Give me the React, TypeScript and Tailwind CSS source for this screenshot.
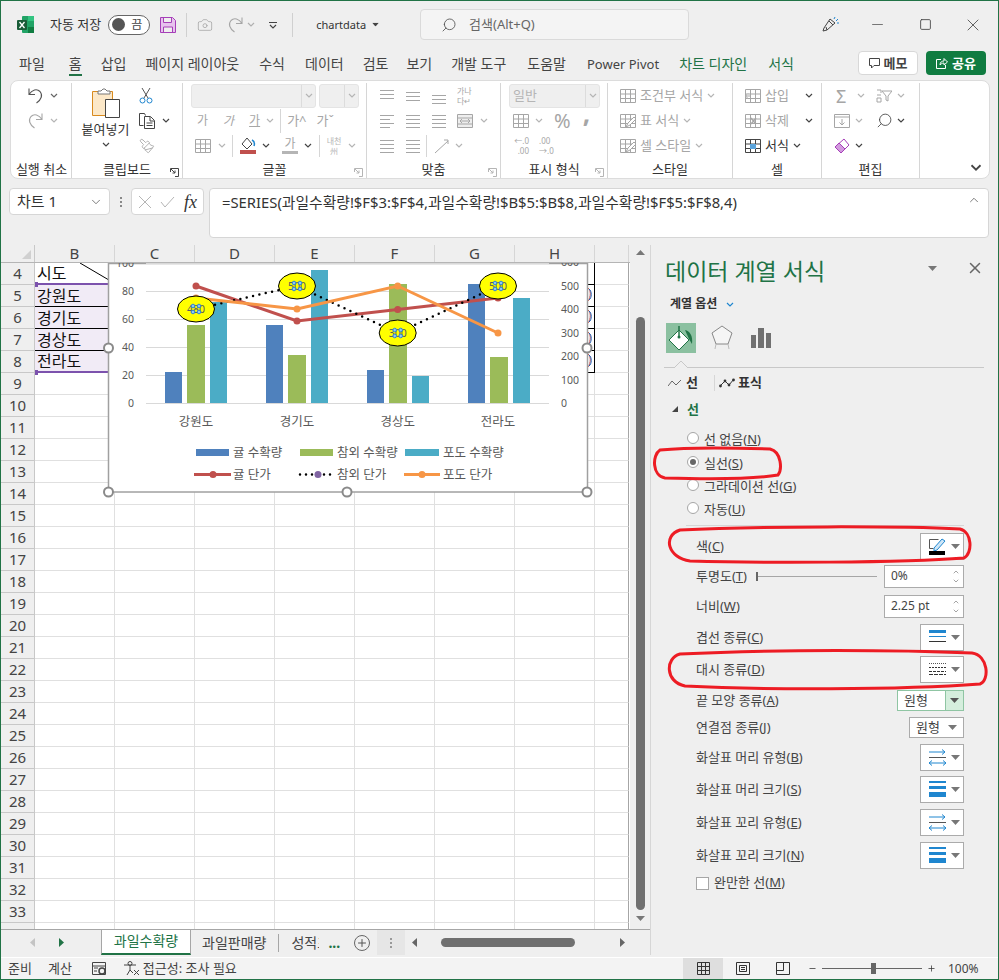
import React, { PropsWithChildren } from "react";
import { Camera, ChevronDown, ChevronUp, Minus, Paintbrush, Plus, Search, Square, X } from "lucide-react";

const cols = ["B", "C", "D", "E", "F", "G", "H", ""];
const rows = Array.from({ length: 31 }, (_, i) => i + 4);
const bCells: Record<number, string> = { 4: "시도", 5: "강원도", 6: "경기도", 7: "경상도", 8: "전라도" };

function Chev({ c = "#666", cls = "" }: { c?: string; cls?: string }) {
  return (
    <svg width="8" height="5" viewBox="0 0 8 5" className={cls}>
      <path d="M1 1l3 3 3-3" fill="none" stroke={c} strokeWidth="1.2" />
    </svg>
  );
}

function Caret({ c = "#666", cls = "" }: { c?: string; cls?: string }) {
  return (
    <svg width="9" height="5" viewBox="0 0 9 5" className={cls}>
      <path d="M0 0h9L4.5 5z" fill={c} />
    </svg>
  );
}

// undo arrow, mirrored for redo
function UndoIcon({ c, flip }: { c: string; flip?: boolean }) {
  return (
    <svg width="17" height="17" viewBox="0 0 17 17" className={flip ? "-scale-x-100" : ""}>
      <path d="M2 1.5v6h6M2 7.5C5 2.5 10 1.5 13 4.5c3 3.5 1.5 8-3.5 11.5" fill="none" stroke={c} strokeWidth="1.1" />
    </svg>
  );
}

function Group({ label, w, launcher, children }: PropsWithChildren<{ label: string; w: string; launcher?: string }>) {
  return (
    <div className={`${w} relative h-full flex flex-col border-r border-[#d6d6d6]`}>
      <div className="h-[75px] flex flex-col">{children}</div>
      <div className="h-[14px] mt-[4px] flex items-center justify-center text-[13px] leading-none text-[#333] whitespace-nowrap">{label}</div>
      {launcher && (
        <svg width="9" height="9" viewBox="0 0 9 9" className="absolute right-[3px] bottom-[1px]">
          <path d="M.5 4V.5h8v8H5M1 1l4 4M5 2.5V5H2.5" fill="none" stroke={launcher} strokeWidth="1" />
        </svg>
      )}
    </div>
  );
}

function Row({ cls = "", children }: PropsWithChildren<{ cls?: string }>) {
  return <div className={`h-[25px] flex items-center ${cls}`}>{children}</div>;
}

function Bars({ ys, x1 = 1, x2 = 15 }: { ys: [number, number][]; x1?: number; x2?: number }) {
  return (
    <svg width="16" height="16" viewBox="0 0 16 16" className="shrink-0">
      {ys.map(([y, w], i) => (
        <path key={i} d={`M${x1} ${y + 0.5}h${w || x2 - x1}`} stroke="#a6a6a6" />
      ))}
    </svg>
  );
}

function GridIcon({ dark = false, mark }: { dark?: boolean; mark?: "pen" | "in" | "del" }) {
  const c = dark ? "#444" : "#a6a6a6";
  return (
    <svg width="16" height="16" viewBox="0 0 16 16" className="shrink-0">
      <path d="M.5 1.5h15v13H.5zM.5 6h15M.5 10.5h15M5.5 1.5v13M10.5 1.5v13" fill="none" stroke={c} />
      {dark && <rect x="5" y="6" width="6" height="5" fill="#5ba4dc" />}
      {mark === "pen" && <path d="M6 14l2-4 6-6 2 2-6 6z" fill="#fff" stroke={c} />}
      {mark === "in" && <path d="M6 8H0M3 5.5L.5 8 3 10.5" fill="#fff" stroke={c} />}
      {mark === "del" && <path d="M6 5l5 6M11 5l-5 6" fill="#fff" stroke={c} strokeWidth="1.4" />}
    </svg>
  );
}

function GrayText({ children }: PropsWithChildren) {
  return <span className="text-[13px] leading-none text-[#a6a6a6] whitespace-nowrap">{children}</span>;
}

function Key({ label, k }: { label: string; k: string }) {
  return (
    <span className="text-[13px] leading-none text-[#444] whitespace-nowrap">
      {label}(<u>{k}</u>)
    </span>
  );
}

function Radio({ label, k, on, cls }: { label: string; k: string; on?: boolean; cls: string }) {
  return (
    <div className={`${cls} flex items-center ml-[36px]`}>
      <span className="w-[12px] h-[12px] rounded-full border border-[#a6a6a6] bg-white flex items-center justify-center">
        {on && <span className="w-[6px] h-[6px] rounded-full bg-[#666]" />}
      </span>
      <span className="ml-[5px]">
        <Key label={label} k={k} />
      </span>
    </div>
  );
}

function Picker({ h = "h-[27px]", children }: PropsWithChildren<{ h?: string }>) {
  return (
    <div className={`${h} w-[44px] border border-[#ababab] bg-white flex items-center pl-[8px] gap-[5px]`}>
      {children}
      <Caret c="#777" />
    </div>
  );
}

function Spinner({ value }: { value: string }) {
  return (
    <div className="w-[80px] h-[23px] border border-[#ababab] bg-white flex items-center justify-between pl-[6px] pr-[3px] text-[12px] text-[#444]">
      <span>{value}</span>
      <span className="flex flex-col gap-[1px]">
        <ChevronUp size={8} color="#777" />
        <ChevronDown size={8} color="#777" />
      </span>
    </div>
  );
}

function ArrowType() {
  return (
    <svg width="17" height="17" viewBox="0 0 17 17">
      <path d="M0 3h16M13 .5L16 3l-3 2.5M0 14h17M3 11.5L0 14l3 2.5M14 11.5l3 2.5-3 2.5" fill="none" stroke="#1f86cf" />
      <path d="M0 8.5h17" stroke="#555" />
    </svg>
  );
}

function ArrowSize() {
  return (
    <svg width="17" height="16" viewBox="0 0 17 16">
      <rect y="0" width="17" height="2" fill="#1f86cf" />
      <rect y="5" width="17" height="3" fill="#1f86cf" />
      <rect y="11" width="17" height="5" fill="#1f86cf" />
    </svg>
  );
}

function Chart() {
  const groups = [
    { x: 196, v: [[165, 371], [187, 324], [210, 301]] },
    { x: 297, v: [[266, 324], [288, 354], [311, 269]] },
    { x: 397.7, v: [[367, 369], [389, 283], [412, 375]] },
    { x: 498, v: [[468, 283], [490, 356], [513, 297]] },
  ];
  const fills = ["#4f81bd", "#9bbb59", "#4bacc6"];
  const widths = [17, 18, 17];
  const bubbles = [
    { x: 196, y: 308, t: "480" },
    { x: 297, y: 285, t: "500" },
    { x: 397.7, y: 332, t: "300" },
    { x: 498, y: 285, t: "500" },
  ];
  const red = [[196, 285], [297, 320], [397.7, 308.5], [498, 297]];
  const orange = [[196, 297], [297, 308], [397.7, 285], [498, 332]];
  const pts = (a: number[][]) => a.map((p) => p.join(",")).join(" ");
  const family = "'Noto Sans','Noto Sans CJK KR',sans-serif";
  const font = { fontFamily: family, fontSize: 12.5, fill: "#595959" };
  const axis = { fontFamily: family, fontSize: 10.5, fill: "#595959" };
  return (
    <svg width="500" height="240" viewBox="98 262 500 240" className="absolute left-[97px] top-[0px]">
      <rect x="108.5" y="262.5" width="479" height="228.5" fill="#fff" stroke="#a0a0a0" strokeWidth="1.5" />
      {[262, 290, 318, 346, 374, 402].map((y) => (
        <path key={y} d={`M146 ${y}.5H549`} stroke="#d9d9d9" />
      ))}
      {["100", "80", "60", "40", "20", "0"].map((t, i) => (
        <text key={t} x="134" y={265.5 + i * 28} textAnchor="end" {...axis}>{t}</text>
      ))}
      {["600", "500", "400", "300", "200", "100", "0"].map((t, i) => (
        <text key={t} x="561" y={265 + i * 23.5} {...axis}>{t}</text>
      ))}
      {groups.map((g) =>
        g.v.map(([x, top], i) => <rect key={x} x={x} y={top} width={widths[i]} height={402 - top} fill={fills[i]} />)
      )}
      {groups.map((g, i) => (
        <text key={i} x={g.x} y="425" textAnchor="middle" {...font}>{["강원도", "경기도", "경상도", "전라도"][i]}</text>
      ))}
      <polyline points={pts(red)} fill="none" stroke="#c0504d" strokeWidth="3" />
      <polyline points={pts(bubbles.map((b) => [b.x, b.y]))} fill="none" stroke="#000" strokeWidth="2.5" strokeLinecap="round" strokeDasharray="0 6.5" />
      <polyline points={pts(orange)} fill="none" stroke="#f79646" strokeWidth="3" />
      {red.map(([x, y]) => <circle key={x} cx={x} cy={y} r="3.5" fill="#c0504d" />)}
      {orange.map(([x, y]) => <circle key={x} cx={x} cy={y} r="3.5" fill="#f79646" />)}
      {bubbles.map((b) => (
        <g key={b.x}>
          <ellipse cx={b.x} cy={b.y} rx="18.5" ry="13" fill="#ffff00" stroke="#000" strokeWidth="1" />
          <text x={b.x} y={b.y + 4} textAnchor="middle" {...axis}>{b.t}</text>
          {[[-3, -3], [3, -3], [-3, 3], [3, 3]].map(([dx, dy]) => (
            <circle key={`${dx}${dy}`} cx={b.x + dx} cy={b.y + dy} r="1.8" fill="#8fc7f2" stroke="#2f86d6" strokeWidth="1" />
          ))}
        </g>
      ))}
      <rect x="196" y="448" width="33" height="7" fill="#4f81bd" />
      <text x="233" y="456" {...font}>귤 수확량</text>
      <rect x="300" y="448" width="33" height="7" fill="#9bbb59" />
      <text x="337" y="456" {...font}>참외 수확량</text>
      <rect x="405" y="448" width="34" height="7" fill="#4bacc6" />
      <text x="443" y="456" {...font}>포도 수확량</text>
      <path d="M194 473.5H231" stroke="#c0504d" strokeWidth="3" />
      <circle cx="213" cy="473.5" r="3.5" fill="#c0504d" />
      <text x="233" y="478" {...font}>귤 단가</text>
      <path d="M300 473.5H334" stroke="#000" strokeWidth="2.5" strokeLinecap="round" strokeDasharray="0 6" />
      <circle cx="318" cy="473.5" r="3.5" fill="#8064a2" />
      <text x="337" y="478" {...font}>참외 단가</text>
      <path d="M404 473.5H440" stroke="#f79646" strokeWidth="3" />
      <circle cx="422" cy="473.5" r="3.5" fill="#f79646" />
      <text x="443" y="478" {...font}>포도 단가</text>
      {[[108.5, 347], [108.5, 491], [347, 491], [587, 491], [587, 347]].map(([x, y]) => (
        <circle key={`${x}${y}`} cx={x} cy={y} r="4.5" fill="#fff" stroke="#8a8a8a" strokeWidth="2" />
      ))}
    </svg>
  );
}

export default function App() {
  return (
    <div className="relative w-[999px] h-[980px] box-border border border-[#217346] bg-[#efefef] overflow-hidden flex flex-col text-[#444] font-['Noto_Sans','Noto_Sans_CJK_KR',sans-serif]">
      {/* title bar */}
      <div className="h-[47px] shrink-0 flex items-center">
        <svg width="17" height="17" viewBox="0 0 17 17" className="ml-[16px]">
          <rect x="5" width="12" height="17" rx="1" fill="#21a366" />
          <rect x="11" width="6" height="5" fill="#33c481" />
          <rect x="11" y="11" width="6" height="6" fill="#107c41" />
          <rect x="0" y="4" width="10" height="10" rx="1" fill="#185c37" />
          <path d="M2.5 6l5 6M7.5 6l-5 6" stroke="#fff" strokeWidth="1.3" />
        </svg>
        <span className="ml-[16px] text-[13px] leading-none text-[#333] whitespace-nowrap">자동 저장</span>
        <div className="ml-[7px] w-[42px] h-[20px] rounded-full border border-[#666] bg-white flex items-center justify-between pl-[3px] pr-[7px]">
          <span className="w-[13px] h-[13px] rounded-full bg-[#555]" />
          <span className="text-[12px] leading-none text-[#444]">끔</span>
        </div>
        <svg width="16" height="16" viewBox="0 0 16 16" className="ml-[10px]">
          <path d="M.5.5h12l3 3v12H.5z" fill="#e7c3ee" stroke="#a63fb8" />
          <path d="M3.5 1v4.5h8V1M3.5 15v-5h9v5" fill="#efefef" stroke="#a63fb8" />
        </svg>
        <span className="ml-[10px] w-px h-[24px] bg-[#d0d0d0]" />
        <Camera size={16} color="#a6a6a6" strokeWidth={1.2} className="ml-[10px]" />
        <span className="ml-[14px]"><UndoIcon c="#a6a6a6" flip /></span>
        <Chev c="#b0b0b0" cls="ml-[3px]" />
        <svg width="8" height="8" viewBox="0 0 8 8" className="ml-[14px]">
          <path d="M0 1.5h8M1 4l3 3 3-3" fill="none" stroke="#444" strokeWidth="1.1" />
        </svg>
        <span className="ml-[15px] w-px h-[24px] bg-[#d0d0d0]" />
        <span className="ml-[23px] text-[11px] leading-none text-[#333]">chartdata</span>
        <Caret c="#444" cls="ml-[5px] scale-75" />
        <div className="ml-[40px] w-[269px] h-[31px] rounded-[4px] border border-[#dadada] bg-[#f4f4f4] flex items-center pl-[20px]">
          <Search size={16} color="#555" strokeWidth={1.3} className="-scale-x-100" />
          <span className="ml-[12px] text-[13px] leading-none text-[#666]">검색(Alt+Q)</span>
        </div>
        <svg width="17" height="17" viewBox="0 0 17 17" className="ml-[133px]">
          <path d="M1 15l1-3 6-9 5 4-8 7zM5 14l-1-3M7 5l4 4" fill="none" stroke="#444" />
          <path d="M12 3l1-2M14 5l2-2M15 7h2" stroke="#1f86cf" />
        </svg>
        <Minus size={17} color="#444" strokeWidth={1} className="ml-[30px]" />
        <Square size={13} color="#444" strokeWidth={1.6} className="ml-[33px]" />
        <X size={20} color="#444" strokeWidth={1} className="ml-[31px]" />
      </div>

      {/* menu tabs */}
      <div className="h-[32px] shrink-0 flex items-center pl-[18px] text-[14px] leading-none text-[#444] whitespace-nowrap relative">
        <span>파일</span>
        <span className="ml-[24px] relative">
          홈<span className="absolute left-0 right-0 top-[17px] h-[2px] bg-[#217346]" />
        </span>
        <span className="ml-[19px]">삽입</span>
        <span className="ml-[19px]">페이지 레이아웃</span>
        <span className="ml-[20px]">수식</span>
        <span className="ml-[20px]">데이터</span>
        <span className="ml-[19px]">검토</span>
        <span className="ml-[18px]">보기</span>
        <span className="ml-[19px]">개발 도구</span>
        <span className="ml-[21px]">도움말</span>
        <span className="ml-[21px] text-[13px]">Power Pivot</span>
        <span className="ml-[20px] text-[#217346]">차트 디자인</span>
        <span className="ml-[21px] text-[#217346]">서식</span>
        <div className="absolute left-[857px] top-[3px] w-[60px] h-[24px] rounded-[4px] border border-[#d8d8d8] bg-white flex items-center justify-center gap-[4px] text-[13px] font-bold">
          <svg width="11" height="11" viewBox="0 0 11 11">
            <path d="M.5.5h10v7H5L2.5 10V7.5h-2z" fill="none" stroke="#444" />
          </svg>
          메모
        </div>
        <div className="absolute left-[925px] top-[3px] w-[60px] h-[24px] rounded-[4px] bg-[#107c41] flex items-center justify-center gap-[4px] text-[13px] font-bold text-white">
          <svg width="12" height="12" viewBox="0 0 12 12">
            <path d="M5 2.5H.5v9h9V8M4 8c0-3 2-4 4-4V1.5l3.5 3.5L8 8V6C6 6 5 7 4 8z" fill="none" stroke="#fff" />
          </svg>
          공유
        </div>
      </div>

      {/* ribbon */}
      <div className="ml-[9px] w-[980px] h-[99px] shrink-0 rounded-[8px] border border-[#dcdcdc] bg-white flex pt-[2px] pl-[1px] relative">
        <Group label="실행 취소" w="w-[60px]">
          <Row cls="pl-[15px] gap-[6px]">
            <UndoIcon c="#555" />
            <Chev />
          </Row>
          <Row cls="pl-[15px] gap-[6px]">
            <UndoIcon c="#a6a6a6" flip />
            <Chev c="#b5b5b5" />
          </Row>
        </Group>
        <Group label="클립보드" w="w-[111px]" launcher="#444">
          <div className="flex h-full">
            <div className="w-[67px] flex flex-col items-center pt-[5px]">
              <svg width="28" height="30" viewBox="0 0 28 30">
                <path d="M.5 3.5h20v24H.5z" fill="#fce8c8" stroke="#d88a1e" strokeWidth="1" />
                <path d="M6 6V3h3l2-2h2l2 2h3v3z" fill="#fff" stroke="#777" />
                <path d="M13.5 11.5h14v18h-14z" fill="#fff" stroke="#444" />
              </svg>
              <span className="mt-[5px] text-[13px] leading-none text-[#333] whitespace-nowrap">붙여넣기</span>
              <Chev c="#444" cls="mt-[6px]" />
            </div>
            <div className="flex flex-col">
              <Row>
                <svg width="14" height="17" viewBox="0 0 14 17">
                  <path d="M3 1l6 10M11 1L5 11" stroke="#555" fill="none" />
                  <circle cx="3.5" cy="13.5" r="2.5" fill="none" stroke="#1f86cf" />
                  <circle cx="10.5" cy="13.5" r="2.5" fill="none" stroke="#1f86cf" />
                </svg>
              </Row>
              <Row cls="gap-[7px]">
                <svg width="16" height="16" viewBox="0 0 16 16">
                  <path d="M4.5 12.5h-4V.5h5l1 2" fill="none" stroke="#444" />
                  <path d="M5.5 3.5h6l4 4v8h-10zM11 4v4h4M7.5 10h6M7.5 12.5h6" fill="#fff" stroke="#444" />
                </svg>
                <Chev c="#444" />
              </Row>
              <Row>
                <Paintbrush size={16} color="#a6a6a6" strokeWidth={1.3} className="-scale-x-100" />
              </Row>
            </div>
          </div>
        </Group>
        <Group label="글꼴" w="w-[184px]" launcher="#b5b5b5">
          <Row cls="pl-[8px] gap-[3px]">
            <div className="w-[125px] h-[24px] rounded-[3px] border border-[#e4e4e4] bg-[#efefef] flex justify-end">
              <span className="w-[14px] border-l border-[#dcdcdc] flex items-center justify-center"><Chev c="#b5b5b5" /></span>
            </div>
            <div className="w-[40px] h-[24px] rounded-[3px] border border-[#e4e4e4] bg-[#efefef] flex justify-end">
              <span className="w-[14px] border-l border-[#dcdcdc] flex items-center justify-center"><Chev c="#b5b5b5" /></span>
            </div>
          </Row>
          <Row cls="pl-[14px] text-[12px] text-[#a6a6a6] leading-none">
            <span>가</span>
            <span className="ml-[15px] italic">가</span>
            <span className="ml-[15px] underline">가</span>
            <Chev c="#b5b5b5" cls="ml-[6px]" />
            <span className="ml-[6px] w-px h-[24px] bg-[#d6d6d6]" />
            <span className="ml-[6px] text-[13px]">가^</span>
            <span className="ml-[10px] text-[13px]">가ˇ</span>
          </Row>
          <Row cls="pl-[12px]">
            <GridIcon />
            <Chev c="#b5b5b5" cls="ml-[7px]" />
            <span className="ml-[6px] w-px h-[22px] bg-[#d6d6d6]" />
            <svg width="16" height="17" viewBox="0 0 16 17" className="ml-[7px]">
              <path d="M7 1l-5 6 5 5 5-5z" fill="none" stroke="#444" />
              <path d="M12 3c2 1 3 3 2 6" fill="none" stroke="#1f86cf" strokeWidth="1.5" />
              <rect y="13" width="16" height="4" fill="#c0504d" />
            </svg>
            <Chev c="#444" cls="ml-[6px]" />
            <span className="ml-[12px] w-[16px] flex flex-col items-center text-[12px] leading-none text-[#a6a6a6]">
              가<span className="w-[16px] h-[3px] mt-[1px] bg-[#b5b5b5]" />
            </span>
            <Chev c="#444" cls="ml-[6px]" />
            <span className="ml-[7px] w-px h-[22px] bg-[#d6d6d6]" />
            <span className="ml-[5px] w-[18px] text-[8px] leading-[10px] text-center text-[#b5b5b5]">내천<br />州</span>
            <Chev c="#b5b5b5" cls="ml-[5px]" />
          </Row>
        </Group>
        <Group label="맞춤" w="w-[134px]" launcher="#b5b5b5">
          <Row cls="pl-[12px] gap-[10px]">
            <Bars ys={[[2, 0], [6, 0], [10, 0]]} />
            <Bars ys={[[4, 0], [8, 0], [12, 0]]} />
            <Bars ys={[[7, 0], [11, 0], [15, 0]]} />
            <span className="text-[8px] leading-[10px] text-[#a6a6a6] w-[18px]">가나<br />다↵</span>
          </Row>
          <Row cls="pl-[12px] gap-[10px]">
            <Bars ys={[[2, 0], [6, 10], [10, 0], [14, 10]]} />
            <Bars ys={[[2, 0], [6, 0], [10, 0], [14, 0]]} />
            <Bars ys={[[2, 0], [6, 0], [10, 0], [14, 0]]} />
            <svg width="16" height="16" viewBox="0 0 16 16">
              <path d="M.5 1.5h15v13H.5zM.5 5h15M.5 11h15M3 8h10M5 6l-2 2 2 2M11 6l2 2-2 2" fill="#eee" stroke="#a6a6a6" />
            </svg>
            <Chev c="#b5b5b5" cls="-ml-[3px]" />
          </Row>
          <Row cls="pl-[12px]">
            <Bars ys={[[2, 0], [6, 0], [10, 0], [14, 0]]} />
            <span className="ml-[10px]"><Bars ys={[[2, 0], [6, 0], [10, 0], [14, 0]]} /></span>
            <span className="ml-[5px] w-px h-[22px] bg-[#d6d6d6]" />
            <svg width="17" height="16" viewBox="0 0 17 16" className="ml-[6px]">
              <path d="M2 15L15 3M11 2h4v4" fill="none" stroke="#a6a6a6" />
            </svg>
            <Chev c="#b5b5b5" cls="ml-[5px]" />
          </Row>
        </Group>
        <Group label="표시 형식" w="w-[107px]" launcher="#b5b5b5">
          <Row cls="pl-[8px]">
            <div className="w-[91px] h-[24px] rounded-[3px] border border-[#e4e4e4] bg-[#efefef] flex items-center justify-between pl-[3px] text-[13px] leading-none text-[#b5b5b5]">
              일반
              <span className="w-[14px] h-full border-l border-[#dcdcdc] flex items-center justify-center"><Chev c="#b5b5b5" /></span>
            </div>
          </Row>
          <Row cls="pl-[12px]">
            <GridIcon />
            <Chev c="#b5b5b5" cls="ml-[6px]" />
            <span className="ml-[11px] text-[20px] leading-none text-[#a6a6a6]">%</span>
            <span className="ml-[12px] h-[25px] text-[26px] leading-none font-bold text-[#a6a6a6] -mt-[16px]">,</span>
          </Row>
          <Row cls="pl-[12px] gap-[10px] text-[8px] leading-[10px] text-[#a6a6a6]">
            <span className="w-[16px] text-right">←.0<br />.00</span>
            <span className="w-[16px]">.00<br />→.0</span>
          </Row>
        </Group>
        <Group label="스타일" w="w-[125px]">
          <Row cls="pl-[12px] gap-[4px]"><GridIcon /><GrayText>조건부 서식</GrayText><Chev c="#b5b5b5" /></Row>
          <Row cls="pl-[12px] gap-[4px]"><GridIcon mark="pen" /><GrayText>표 서식</GrayText><Chev c="#b5b5b5" /></Row>
          <Row cls="pl-[12px] gap-[4px]"><GridIcon mark="pen" /><GrayText>셀 스타일</GrayText><Chev c="#b5b5b5" /></Row>
        </Group>
        <Group label="셀" w="w-[89px]">
          <Row cls="pl-[12px] gap-[4px]"><GridIcon mark="in" /><GrayText>삽입</GrayText><Chev c="#444" cls="ml-[12px]" /></Row>
          <Row cls="pl-[12px] gap-[4px]"><GridIcon mark="del" /><GrayText>삭제</GrayText><Chev c="#444" cls="ml-[12px]" /></Row>
          <Row cls="pl-[12px] gap-[4px]">
            <GridIcon dark />
            <span className="text-[13px] leading-none text-[#333]">서식</span>
            <Chev c="#444" />
          </Row>
        </Group>
        <Group label="편집" w="w-[98px]">
          <Row cls="pl-[14px]">
            <span className="w-[16px] text-[18px] leading-none text-[#a6a6a6]">Σ</span>
            <Chev c="#b5b5b5" cls="ml-[5px]" />
            <svg width="16" height="14" viewBox="0 0 16 14" className="ml-[11px]">
              <path d="M1 1h4v3M1 6h4M1 9h4v4H1zM6 2h10l-4 5v5l-2-1V7z" fill="none" stroke="#a6a6a6" />
            </svg>
            <Chev c="#b5b5b5" cls="ml-[5px]" />
          </Row>
          <Row cls="pl-[12px]">
            <svg width="16" height="14" viewBox="0 0 16 14">
              <path d="M.5.5h15v13H.5zM.5 3h15M8 5v6M5.5 8.5L8 11l2.5-2.5" fill="none" stroke="#a6a6a6" />
            </svg>
            <Chev c="#b5b5b5" cls="ml-[5px]" />
            <Search size={17} color="#444" strokeWidth={1.2} className="ml-[13px] -scale-x-100" />
            <Chev c="#444" cls="ml-[4px]" />
          </Row>
          <Row cls="pl-[12px]">
            <svg width="16" height="16" viewBox="0 0 16 16">
              <path d="M10 1l5 6-8 8-6-6z" fill="#fff" stroke="#a63fb8" />
              <path d="M5 5l6 6-4 4-6-6z" fill="#d29ade" stroke="#a63fb8" />
            </svg>
            <Chev c="#444" cls="ml-[5px]" />
          </Row>
        </Group>
        <Chev c="#444" cls="absolute right-[9px] top-[84px] scale-150" />
      </div>

      {/* formula bar */}
      <div className="h-[50px] mt-[9px] shrink-0 flex items-start pl-[8px]">
        <div className="w-[101px] h-[27px] rounded-[4px] border border-[#d6d6d6] bg-white flex items-center justify-between pl-[7px] pr-[6px] text-[15px] leading-none text-[#333]">
          차트 1
          <ChevronDown size={14} color="#555" strokeWidth={1.3} />
        </div>
        <div className="w-[21px] h-[27px] flex flex-col items-center justify-center gap-[2px]">
          <span className="w-[2px] h-[2px] bg-[#888]" />
          <span className="w-[2px] h-[2px] bg-[#888]" />
          <span className="w-[2px] h-[2px] bg-[#888]" />
        </div>
        <div className="w-[73px] h-[27px] rounded-[4px] border border-[#d6d6d6] bg-white flex items-center pl-[7px] gap-[9px]">
          <svg width="12" height="12" viewBox="0 0 12 12">
            <path d="M0 0l12 12M12 0L0 12" stroke="#b5b5b5" />
          </svg>
          <svg width="15" height="12" viewBox="0 0 15 12">
            <path d="M1 6l4 5 9-10" fill="none" stroke="#b5b5b5" />
          </svg>
          <span className="text-[18px] leading-none italic text-[#333] font-['Liberation_Serif',serif]">fx</span>
        </div>
        <div className="ml-[5px] w-[780px] h-[50px] rounded-[4px] border border-[#d6d6d6] bg-white pl-[12px] pt-[4px] flex justify-between pr-[7px]">
          <span className="text-[14.8px] leading-[18px] text-[#333] whitespace-nowrap">=SERIES(과일수확량!$F$3:$F$4,과일수확량!$B$5:$B$8,과일수확량!$F$5:$F$8,4)</span>
          <ChevronUp size={14} color="#555" strokeWidth={1.3} />
        </div>
      </div>

      {/* workspace */}
      <div className="mt-[7px] h-[710px] shrink-0 flex">
        <div className="w-[649px] flex flex-col shrink-0">
          <div className="flex-1 flex min-h-0">
            <div className="w-[629px] shrink-0 flex flex-col">
              <div className="h-[18px] shrink-0 flex bg-[#efefef] border-b border-[#b5b5b5] text-[15px] leading-none text-[#444]">
                <div className="w-[34px] border-r border-[#c8c8c8] flex justify-end items-end pr-[3px] pb-[3px]">
                  <svg width="9" height="9" viewBox="0 0 9 9"><path d="M9 0v9H0z" fill="#d0d0d0" /></svg>
                </div>
                {cols.map((c) => (
                  <div key={c} className={`${c ? "w-[80px]" : "w-[34px]"} border-r border-[#d6d6d6] flex items-center justify-center`}>{c}</div>
                ))}
              </div>
              <div className="relative flex-1 overflow-hidden bg-white">
                {rows.map((r) => (
                  <div key={r} className="h-[22px] flex">
                    <div className="w-[34px] shrink-0 bg-[#efefef] border-r border-b border-[#c8c8c8] flex items-center justify-center text-[15px] leading-none text-[#444]">{r}</div>
                    {cols.map((c) => {
                      const isB = c === "B" && r >= 5 && r <= 8;
                      const isH = c === "H" && r >= 4 && r <= 8;
                      const purple = c === "B" && (r === 4 || r === 8);
                      let tone = "border-[#e0e0e0]";
                      if (purple) tone = "border-r-[#d9d9d9] border-b-[#7c52ad]";
                      else if (isB) tone = "border-r-[#d9d9d9] border-b-black";
                      else if (isH) tone = "border-r-black border-b-black";
                      else if (c === "") tone = "border-b-[#e0e0e0] border-r-[#a6a6a6]";
                      return (
                        <div
                          key={c}
                          className={`${c ? "w-[80px]" : "w-[34px]"} relative shrink-0 border-r ${purple ? "border-b-2" : "border-b"} ${tone} ${
                            isB ? "bg-[#f1ebf6]" : ""
                          } flex items-center pl-[2px] text-[16px] leading-none text-[#111]`}
                        >
                          {c === "B" && bCells[r]}
                          {c === "B" && r === 4 && (
                            <svg width="34" height="22" viewBox="0 0 34 22" className="absolute right-[0px] top-[0px]">
                              <path d="M0 0l34 20" stroke="#000" />
                            </svg>
                          )}
                          {isH && r > 4 && (
                            <svg width="4" height="14" viewBox="0 0 4 14" className="absolute right-[2px] top-[3px]">
                              <path d="M0 0c3 2 3 9 0 13" fill="none" stroke="#c0504d" strokeWidth="1" />
                              <path d="M1 1c3 2 3 9 0 11" fill="none" stroke="#1f5fb5" strokeWidth="1" />
                            </svg>
                          )}
                        </div>
                      );
                    })}
                  </div>
                ))}
                <span className="absolute left-[34px] top-[19px] w-[3px] h-[5px] bg-[#7c52ad]" />
                <span className="absolute left-[34px] top-[107px] w-[3px] h-[5px] bg-[#7c52ad]" />
                <Chart />
              </div>
            </div>
            <div className="w-[20px] shrink-0 flex flex-col items-center pt-[5px]">
              <Caret c="#777" cls="rotate-180" />
              <div className="mt-[62px] w-[9px] h-[593px] rounded-full bg-[#707070]" />
              <Caret c="#777" cls="mt-[6px]" />
            </div>
          </div>
          {/* sheet tabs */}
          <div className="h-[26px] shrink-0 flex items-center border-t border-[#a6a6a6] text-[14px] leading-none text-[#444]">
            <Caret c="#c4c4c4" cls="ml-[27px] rotate-90" />
            <Caret c="#217346" cls="ml-[20px] -rotate-90" />
            <div className="ml-[35px] w-[90px] h-full bg-white border-x border-[#a6a6a6] border-b-2 border-b-[#217346] flex items-center justify-center text-[#217346] -mt-px whitespace-nowrap">과일수확량</div>
            <span className="ml-[11px] whitespace-nowrap">과일판매량</span>
            <span className="ml-[12px] w-px h-[18px] bg-[#a6a6a6]" />
            <span className="ml-[12px] w-[28px] overflow-hidden whitespace-nowrap">성적표</span>
            <span className="ml-[9px] font-bold text-[#217346]">...</span>
            <span className="ml-[14px] w-[16px] h-[16px] rounded-full border border-[#666] flex items-center justify-center">
              <Plus size={12} color="#555" />
            </span>
            <div className="ml-[7px] w-[28px] h-full bg-[#e6e6e6] flex flex-col items-center justify-center gap-[2px]">
              <span className="w-[2px] h-[2px] bg-[#999]" />
              <span className="w-[2px] h-[2px] bg-[#999]" />
              <span className="w-[2px] h-[2px] bg-[#999]" />
            </div>
            <Caret c="#666" cls="ml-[5px] rotate-90" />
            <div className="ml-[22px] w-[134px] h-[9px] rounded-full bg-[#707070]" />
            <Caret c="#666" cls="ml-[43px] -rotate-90" />
          </div>
        </div>
        {/* format pane */}
        <div className="flex-1 border-l border-[#d6d6d6] relative">
          <div className="h-[52px] pl-[14px] pr-[14px] flex items-center justify-between">
            <span className="text-[23px] leading-none text-[#217346] whitespace-nowrap">데이터 계열 서식</span>
            <span className="flex items-center gap-[29px] -mt-[6px]">
              <Caret c="#777" />
              <X size={18} color="#666" strokeWidth={2} />
            </span>
          </div>
          <div className="h-[14px] pl-[19px] flex items-center gap-[9px] text-[12px] leading-none font-bold text-[#333]">
            계열 옵션
            <Chev c="#1f86cf" />
          </div>
          <div className="mt-[12px] h-[30px] ml-[15px] flex items-center">
            <div className="w-[30px] h-[30px] bg-[#8bc0a0] flex items-center justify-center">
              <svg width="26" height="26" viewBox="0 0 26 26">
                <path d="M11 5l10 10-10 10L1 15z" fill="#fff" stroke="#217346" strokeWidth="1" />
                <path d="M11 1v11" stroke="#217346" strokeWidth="1.5" />
                <circle cx="11" cy="12" r="1.5" fill="#217346" />
                <path d="M17 5c5 1 8 6 7 14l-3-5z" fill="#217346" />
              </svg>
            </div>
            <svg width="22" height="26" viewBox="0 0 22 26" className="ml-[15px]">
              <path d="M11 1l10 7-4 11H5L1 8z" fill="#f5f5f5" stroke="#888" />
              <path d="M5 19l-1 5M17 19l1 5" stroke="#bbb" />
            </svg>
            <svg width="20" height="20" viewBox="0 0 20 20" className="ml-[18px]">
              <path d="M0 7h5v13H0zM7 0h6v20H7zM15 5h5v15h-5z" fill="#707070" />
            </svg>
          </div>
          <div className="mt-[14px] ml-[13px] w-[320px] h-px bg-[#c8c8c8] relative">
            <svg width="14" height="8" viewBox="0 0 14 8" className="absolute left-[10px] -top-[7px]">
              <path d="M0 8l7-7 7 7" fill="#efefef" stroke="#c8c8c8" />
            </svg>
          </div>
          <div className="h-[29px] pl-[17px] flex items-center text-[13px] leading-none font-bold text-[#333]">
            <svg width="13" height="8" viewBox="0 0 13 8"><path d="M0 7l4-5 4 4 5-5" fill="none" stroke="#666" /></svg>
            <span className="ml-[5px]">선</span>
            <span className="ml-[16px] w-px h-[16px] bg-[#d6d6d6]" />
            <svg width="16" height="10" viewBox="0 0 16 10" className="ml-[4px]">
              <path d="M1 8l5-5 4 4 5-6" fill="none" stroke="#333" />
              <circle cx="6" cy="3" r="1.4" fill="#333" /><circle cx="10" cy="7" r="1.4" fill="#333" /><circle cx="1.5" cy="8" r="1.4" fill="#333" /><circle cx="14.5" cy="2" r="1.4" fill="#333" />
            </svg>
            <span className="ml-[3px]">표식</span>
          </div>
          <div className="h-[24px] pl-[20px] flex items-center gap-[6px] text-[13px] leading-none font-bold text-[#217346]">
            <svg width="8" height="8" viewBox="0 0 8 8"><path d="M7 1v6H1z" fill="#444" /></svg>
            <span className="ml-[2px]">선</span>
          </div>
          <div className="mt-[5px]">
            <Radio cls="h-[24px]" label="선 없음" k="N" />
            <Radio cls="h-[23px]" label="실선" k="S" on />
            <Radio cls="h-[23px]" label="그라데이션 선" k="G" />
            <Radio cls="h-[23px]" label="자동" k="U" />
          </div>
          <div className="mt-[6px] ml-[35px] w-[278px] h-px bg-[#d6d6d6]" />
          <div className="ml-[45px] w-[268px] text-[12px]">
            <div className="h-[40px] flex items-center justify-between">
              <Key label="색" k="C" />
              <Picker>
                <svg width="17" height="17" viewBox="0 0 17 17">
                  <path d="M.5 1.5h9M.5 1.5v9h4" fill="none" stroke="#555" />
                  <path d="M5 10l8-9 3 2-8 9-3 1z" fill="#cfe6f7" stroke="#1f86cf" />
                  <rect y="13" width="16" height="4" fill="#000" />
                </svg>
              </Picker>
            </div>
            <div className="h-[20px] flex items-center">
              <Key label="투명도" k="T" />
              <span className="ml-[9px] w-[2px] h-[9px] bg-[#666]" />
              <span className="w-[120px] h-px bg-[#a6a6a6]" />
              <span className="ml-[7px]"><Spinner value="0%" /></span>
            </div>
            <div className="h-[40px] flex items-center justify-between">
              <Key label="너비" k="W" />
              <Spinner value="2.25 pt" />
            </div>
            <div className="h-[22px] flex items-center justify-between">
              <Key label="겹선 종류" k="C" />
              <Picker>
                <svg width="17" height="14" viewBox="0 0 17 14">
                  <rect width="17" height="3" fill="#1f86cf" />
                  <rect y="6" width="17" height="1" fill="#1f86cf" />
                  <rect y="11" width="17" height="1" fill="#333" />
                </svg>
              </Picker>
            </div>
            <div className="h-[42px] flex items-center justify-between">
              <Key label="대시 종류" k="D" />
              <Picker>
                <svg width="17" height="14" viewBox="0 0 17 14">
                  <path d="M0 1.5h17" stroke="#555" strokeDasharray="1 1" />
                  <path d="M0 5.5h17" stroke="#333" strokeDasharray="2 1" />
                  <path d="M0 9.5h17" stroke="#333" strokeDasharray="3 1" />
                  <path d="M0 12.5h17" stroke="#333" strokeDasharray="4 1" />
                </svg>
              </Picker>
            </div>
            <div className="h-[20px] flex items-center justify-between">
              <Key label="끝 모양 종류" k="A" />
              <div className="w-[67px] h-[21px] border border-[#8fc5a3] bg-white flex items-center justify-between pl-[6px] text-[13px] leading-none text-[#444]">
                원형
                <span className="w-[18px] h-full bg-[#d5eedd] border-l border-[#8fc5a3] flex items-center justify-center"><Caret c="#555" /></span>
              </div>
            </div>
            <div className="h-[34px] flex items-center justify-between">
              <Key label="연결점 종류" k="J" />
              <div className="w-[55px] h-[21px] border border-[#ababab] bg-white flex items-center justify-between px-[6px] text-[13px] leading-none text-[#444]">
                원형
                <Caret c="#777" />
              </div>
            </div>
            <div className="h-[26px] flex items-center justify-between">
              <Key label="화살표 머리 유형" k="B" />
              <Picker><ArrowType /></Picker>
            </div>
            <div className="h-[38px] flex items-center justify-between">
              <Key label="화살표 머리 크기" k="S" />
              <Picker><ArrowSize /></Picker>
            </div>
            <div className="h-[28px] flex items-center justify-between">
              <Key label="화살표 꼬리 유형" k="E" />
              <Picker><ArrowType /></Picker>
            </div>
            <div className="h-[38px] flex items-center justify-between">
              <Key label="화살표 꼬리 크기" k="N" />
              <Picker><ArrowSize /></Picker>
            </div>
            <div className="h-[18px] flex items-center">
              <span className="w-[13px] h-[13px] border border-[#a6a6a6] bg-white" />
              <span className="ml-[5px]"><Key label="완만한 선" k="M" /></span>
            </div>
          </div>
        </div>
      </div>

      {/* status bar */}
      <div className="mt-[2px] flex-1 bg-[#f3f3f3] border-t border-white flex items-center pl-[7px] pr-[19px] text-[13px] leading-none text-[#444] whitespace-nowrap">
        <span>준비</span>
        <span className="ml-[16px]">계산</span>
        <svg width="15" height="14" viewBox="0 0 15 14" className="ml-[20px]">
          <path d="M.5.5h13v12H.5zM.5 4h13" fill="none" stroke="#444" />
          <circle cx="10" cy="9" r="3" fill="none" stroke="#444" strokeWidth="1.5" />
          <path d="M2 6h4M2 9h3" stroke="#444" />
        </svg>
        <svg width="16" height="15" viewBox="0 0 16 15" className="ml-[17px]">
          <circle cx="6" cy="2.5" r="2" fill="none" stroke="#444" />
          <path d="M0 4h12M6 5v4l-3 5M6 9l3 3M10 9l5 5M15 9l-5 5" fill="none" stroke="#444" />
        </svg>
        <span className="ml-[3px]">접근성: 조사 필요</span>
        <div className="ml-auto w-[40px] h-[21px] bg-[#dedede] flex items-center justify-center">
          <svg width="13" height="13" viewBox="0 0 13 13"><path d="M.5.5h12v12H.5zM.5 4.5h12M.5 8.5h12M4.5.5v12M8.5.5v12" fill="none" stroke="#333" /></svg>
        </div>
        <svg width="14" height="13" viewBox="0 0 14 13" className="ml-[13px]"><path d="M.5.5h13v12H.5zM3.5 3.5h7v6h-7zM5 5.5h4M5 7.5h4" fill="none" stroke="#333" /></svg>
        <svg width="14" height="13" viewBox="0 0 14 13" className="ml-[26px]"><path d="M.5.5h13v12H.5zM.5 8.5h7V.5" fill="none" stroke="#333" /></svg>
        <Minus size={9} color="#333" className="ml-[18px]" />
        <div className="ml-[5px] w-[100px] h-px bg-[#666] relative">
          <span className="absolute left-[49px] -top-[5px] w-[5px] h-[11px] bg-[#666]" />
        </div>
        <Plus size={9} color="#333" className="ml-[5px]" />
        <span className="ml-[12px] w-[31px] text-[12px]">100%</span>
      </div>

      {/* hand-drawn red marks */}
      <svg width="999" height="980" viewBox="0 0 999 980" className="absolute -left-px -top-px pointer-events-none" fill="none" stroke="#ed1c24" strokeWidth="3">
        <path d="M660 450C690 447 740 448 770 449C782 452 782 470 778 475C750 480 700 479 665 478C652 476 652 455 660 450Z" />
        <path d="M680 530C760 526 900 526 960 529C972 532 973 553 964 558C900 563 760 563 690 561C668 558 662 536 680 530Z" />
        <path d="M680 654C780 649 900 650 972 653C988 655 990 680 980 684C900 690 760 690 685 686C665 682 665 658 680 654Z" />
      </svg>
    </div>
  );
}
